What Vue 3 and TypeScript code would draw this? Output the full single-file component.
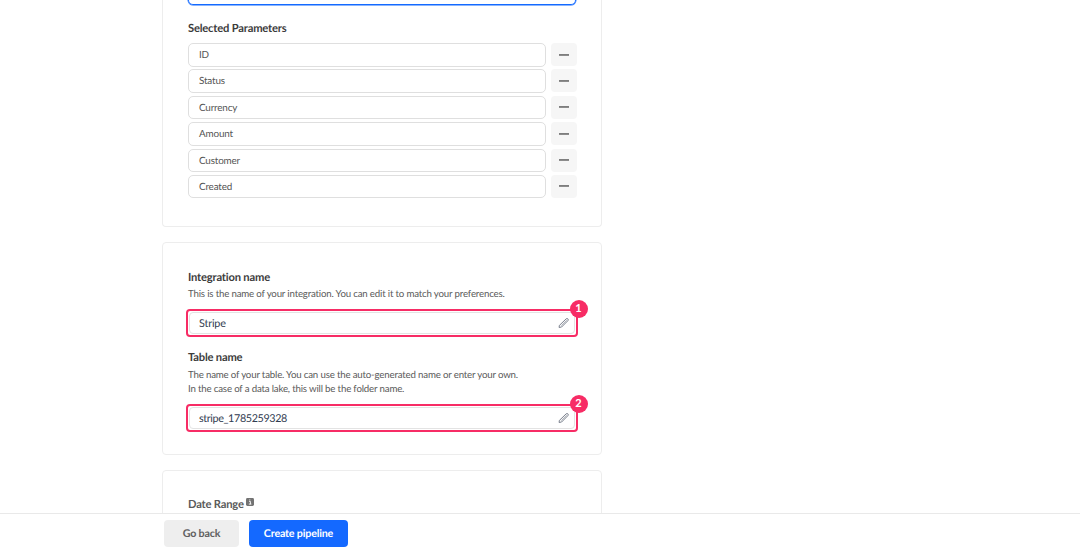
<script setup lang="ts">
const parameters: string[] = ['ID', 'Status', 'Currency', 'Amount', 'Customer', 'Created']

interface NameField {
  step: number
  title: string
  hint: string[]
  value: string
}

const fields: NameField[] = [
  {
    step: 1,
    title: 'Integration name',
    hint: ['This is the name of your integration. You can edit it to match your preferences.'],
    value: 'Stripe',
  },
  {
    step: 2,
    title: 'Table name',
    hint: [
      'The name of your table. You can use the auto-generated name or enter your own.',
      'In the case of a data lake, this will be the folder name.',
    ],
    value: 'stripe_1785259328',
  },
]
</script>

<template>
  <div class="page">
    <main class="content">
      <section class="card card-parameters">
        <div class="search"></div>
        <h3 class="title">Selected Parameters</h3>
        <div class="rows">
          <div v-for="name in parameters" :key="name" class="row">
            <div class="param">{{ name }}</div>
            <button class="remove" type="button" aria-label="Remove">
              <svg class="dash" viewBox="0 0 12 4"><rect x="1" y="1.2" width="10" height="1.5" fill="#606060" /></svg>
            </button>
          </div>
        </div>
      </section>

      <section class="card card-names">
        <div v-for="field in fields" :key="field.step" class="field">
          <h3 class="title">{{ field.title }}</h3>
          <p class="hint"><span v-for="line in field.hint" :key="line">{{ line }}</span></p>
          <div class="highlight">
            <div class="input">
              <span :class="{ identifier: field.step === 2 }">{{ field.value }}</span>
              <svg class="pencil" viewBox="0 0 12 12" fill="none" stroke="#6b7280" stroke-width="0.9" stroke-linejoin="round" stroke-linecap="round">
                <path d="M1.6 8.2 8.1 1.9Q9 1.1 9.9 1.9 10.7 2.8 9.9 3.7L3.6 10 1.5 10.4Z" />
                <path d="M3.5 8.4 8.4 3.5" stroke-width="0.6" />
              </svg>
            </div>
            <span class="badge">{{ field.step }}</span>
          </div>
        </div>
      </section>

      <section class="card card-range">
        <h3 class="title range-title">
          Date Range
          <svg class="info" viewBox="0 0 8 8">
            <rect width="8" height="8" rx="1.4" fill="#737373" />
            <path d="M3.1 3.4h1.3v2.7M2.8 6.1h2.6M3.8 1.4v1.1" fill="none" stroke="#fff" stroke-width="0.9" />
          </svg>
        </h3>
      </section>
    </main>

    <footer class="footer">
      <button class="btn back" type="button">Go back</button>
      <button class="btn create" type="button">Create pipeline</button>
    </footer>
  </div>
</template>

<style>
body {
  margin: 0;
  background: #fff;
}
</style>

<style scoped>
.page {
  box-sizing: border-box;
  display: flex;
  flex-direction: column;
  height: 553px;
  overflow: hidden;
  font-family: Lato, 'Liberation Sans', sans-serif;
  font-variant-ligatures: none;
  text-rendering: geometricPrecision;
  color: #3c3c3c;
}
.content {
  flex: 1;
  min-height: 0;
  overflow: hidden;
  display: flex;
  flex-direction: column;
  gap: 15px;
  width: 440px;
  margin-left: 162px;
}
.card {
  box-sizing: border-box;
  flex: none;
  border: 1px solid #ededed;
  border-radius: 4px;
  padding: 0 24px 0 25px;
}
.card-parameters {
  height: 227px;
  border-top: 0;
  border-radius: 0 0 4px 4px;
}
.search {
  box-sizing: border-box;
  width: 388px;
  height: 5px;
  border: 1px solid #146aff;
  border-top: 0;
  border-radius: 0 0 5px 5px;
  box-shadow: 0 0 0 0.5px #146aff;
}
.title {
  margin: 0;
  font-size: 11.2px;
  letter-spacing: -0.19px;
  line-height: 14px;
  font-weight: 700;
}
.card-parameters .title {
  margin-top: 17px;
}
.rows {
  display: flex;
  flex-direction: column;
  gap: 2.9px;
  margin-top: 7px;
}
.row {
  display: flex;
  gap: 5px;
  height: 23.5px;
}
.param {
  box-sizing: border-box;
  width: 358px;
  padding-left: 10px;
  border: 1px solid #dfdfdf;
  border-radius: 5px;
  font-size: 9.9px;
  letter-spacing: -0.17px;
  line-height: 23.5px;
  color: #555;
}
.remove {
  display: flex;
  align-items: center;
  justify-content: center;
  width: 26px;
  height: 23px;
  padding: 0;
  border: 0;
  border-radius: 4px;
  background: #f6f6f6;
}
.dash {
  width: 12px;
  height: 4px;
}
.card-names {
  height: 213px;
  padding-top: 28px;
}
.hint {
  margin: 2px 0 0;
  font-size: 9.7px;
  letter-spacing: -0.175px;
  line-height: 14px;
  color: #5a5a5a;
}
.hint span {
  display: block;
}
.highlight {
  position: relative;
  box-sizing: border-box;
  width: 392px;
  height: 28px;
  margin: 8px 0 0 -2px;
  padding: 1px;
  border: 2px solid #f72c65;
  border-radius: 4px;
}
.field + .field {
  margin-top: 14px;
}
.field + .field .hint {
  margin-top: 3px;
}
.input {
  box-sizing: border-box;
  display: flex;
  align-items: center;
  justify-content: space-between;
  height: 22px;
  padding: 0 4px 0 9px;
  border: 1px solid #e3e3e3;
  border-radius: 4px;
  font-size: 10.8px;
  letter-spacing: -0.18px;
  color: #303b50;
}
.identifier {
  letter-spacing: -0.38px;
}
.pencil {
  width: 12px;
  height: 12px;
}
.badge {
  position: absolute;
  top: -11px;
  right: -11.5px;
  width: 18px;
  height: 18px;
  border-radius: 50%;
  background: #f72c65;
  color: #fff;
  font-size: 11px;
  font-weight: 700;
  line-height: 18px;
  text-align: center;
}
.card-range {
  height: 100px;
  padding-top: 27px;
}
.range-title {
  display: flex;
  gap: 2px;
  color: #5a5a5a;
}
.info {
  width: 8px;
  height: 8px;
}
.footer {
  box-sizing: border-box;
  flex: none;
  display: flex;
  gap: 10px;
  height: 40px;
  padding: 6px 0 0 164px;
  border-top: 1px solid #e9e9e9;
  background: #fff;
}
.btn {
  height: 27px;
  padding: 0;
  border: 0;
  border-radius: 4px;
  font: inherit;
  font-size: 10.7px;
  font-weight: 700;
  letter-spacing: -0.17px;
  text-rendering: inherit;
}
.back {
  width: 75px;
  background: #eee;
  color: #606060;
}
.create {
  width: 99px;
  background: #1469ff;
  color: #fff;
}
</style>
